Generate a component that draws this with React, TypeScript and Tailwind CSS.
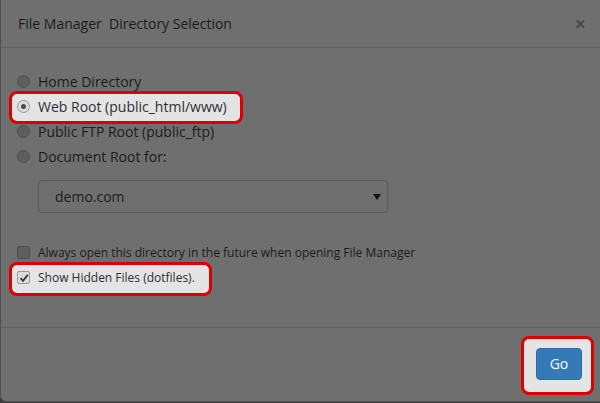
import React from "react";

const font = { fontFamily: '"Open Sans", "Liberation Sans", sans-serif' };

function Radio({ checked }: { checked?: boolean }) {
    return checked ? (
        <span className="w-[13px] h-[13px] rounded-full border border-[#9a9a9a] bg-[#dcdcdc] flex items-center justify-center shrink-0">
            <span className="w-[5px] h-[5px] rounded-full bg-[#4a4a4a]" />
        </span>
    ) : (
        <span className="w-[13px] h-[13px] rounded-full border border-[#4f4f4f] bg-[#5e5e5e] shrink-0" />
    );
}

function Checkbox({ checked }: { checked?: boolean }) {
    return checked ? (
        <span className="w-[13px] h-[13px] rounded-[2px] border border-[#9a9a9a] bg-[#dcdcdc] flex items-center justify-center shrink-0">
            <svg width="10" height="10" viewBox="0 0 10 10">
                <path d="M1.5 5.2 L4 7.8 L8.8 1.8" fill="none" stroke="#333" strokeWidth="1.8" />
            </svg>
        </span>
    ) : (
        <span className="w-[13px] h-[13px] rounded-[2px] border border-[#4f4f4f] bg-[#5e5e5e] shrink-0" />
    );
}

function Highlight({ className }: { className: string }) {
    return <span className={`absolute rounded-[8px] border-[3px] border-[#dd0000] bg-[#e4e4e4] ${className}`} />;
}

export default function App() {
    return (
        <div className="w-[600px] h-[403px] bg-[#3c3c3c] overflow-hidden text-[14px] text-[#1c1c1c]" style={font}>
            <div className="w-[600px] h-[402px] bg-[#6f6f6f] border-l border-b border-[#505050] rounded-bl-[6px] flex flex-col">
                {/* Header */}
                <div className="h-[48px] shrink-0 flex items-center justify-between pl-[17px] pr-[14px] border-b border-[#5f5f5f]">
                    <span className="whitespace-pre">File Manager  Directory Selection</span>
                    <span className="text-[20px] font-bold text-[#4c4c4c] leading-none">×</span>
                </div>

                {/* Body */}
                <div className="flex-1 pt-[21px] pl-[16px]">
                    <div className="flex flex-col">
                        <label className="h-[25px] flex items-center gap-[8px]">
                            <Radio />
                            <span>Home Directory</span>
                        </label>
                        <label className="relative h-[25px] flex items-center gap-[8px]">
                            <Highlight className="-left-[8px] -top-[3px] w-[234px] h-[33px]" />
                            <span className="relative flex items-center gap-[8px] text-[#2b2f36]">
                                <Radio checked />
                                <span>Web Root (public_html/www)</span>
                            </span>
                        </label>
                        <label className="h-[25px] flex items-center gap-[8px]">
                            <Radio />
                            <span>Public FTP Root (public_ftp)</span>
                        </label>
                        <label className="h-[25px] flex items-center gap-[8px]">
                            <Radio />
                            <span>Document Root for:</span>
                        </label>
                    </div>

                    <div className="ml-[21px] mt-[11px] w-[350px] h-[33px] rounded-[4px] border border-[#5a5a5a] flex items-center justify-between pl-[16px] pr-[6px]">
                        <span>demo.com</span>
                        <svg width="8" height="6" viewBox="0 0 8 6">
                            <path d="M0 0 H8 L4 6 Z" fill="#111" />
                        </svg>
                    </div>

                    <div className="mt-[27px] flex flex-col text-[12px]">
                        <label className="h-[25px] flex items-center gap-[8px]">
                            <Checkbox />
                            <span>Always open this directory in the future when opening File Manager</span>
                        </label>
                        <label className="relative h-[25px] flex items-center gap-[8px]">
                            <Highlight className="-left-[8px] -top-[3px] w-[203px] h-[34px]" />
                            <span className="relative flex items-center gap-[8px] text-[#2b2f36]">
                                <Checkbox checked />
                                <span>Show Hidden Files (dotfiles).</span>
                            </span>
                        </label>
                    </div>
                </div>

                {/* Footer */}
                <div className="h-[74px] shrink-0 border-t border-[#5f5f5f] flex items-center justify-end pr-[18px]">
                    <div className="relative">
                        <Highlight className="-left-[15px] -top-[14px] w-[73px] h-[59px]" />
                        <button className="relative w-[46px] h-[32px] rounded-[4px] bg-[#337ab7] border border-[#2e6da4] text-white text-[14px] mt-[-2px]">
                            Go
                        </button>
                    </div>
                </div>
            </div>
        </div>
    );
}
